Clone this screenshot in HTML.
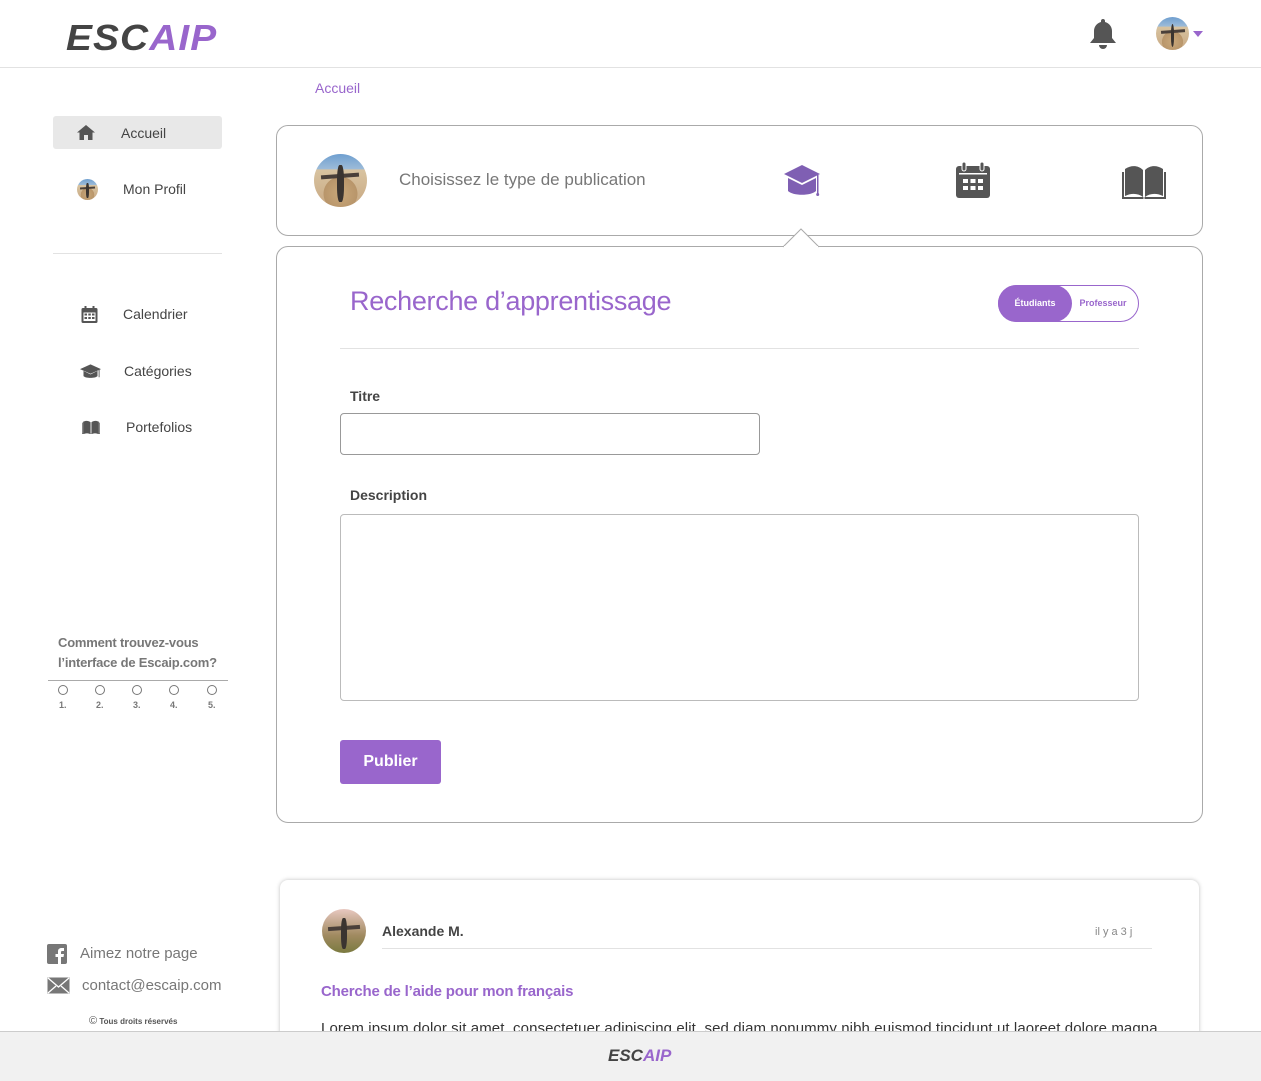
<!DOCTYPE html>
<html><head><meta charset="utf-8"><style>
*{margin:0;padding:0;box-sizing:border-box}
body{width:1261px;height:1081px;position:relative;overflow:hidden;background:#fff;font-family:"Liberation Sans",sans-serif;color:#444}
.a{position:absolute}
.av{border-radius:50%;background:radial-gradient(circle at 50% 75%,#c9a87a 0,#b8956a 35%,transparent 36%),linear-gradient(#6f9fd0 0,#9cbbd8 28%,#d8c3a0 30%,#c8a882 100%);overflow:hidden}
.av:after{content:"";position:absolute;left:44%;top:20%;width:12%;height:70%;background:#3a3430;border-radius:40%}
.av:before{content:"";position:absolute;left:14%;top:38%;width:72%;height:8%;background:#4a403a;transform:rotate(-4deg)}
.nav{font-size:14px;color:#444}
.purple{color:#9966cc}
.rc{position:absolute;width:10px;height:10px;border:1px solid #777;border-radius:50%}
.rn{position:absolute;font-size:9px;font-weight:bold;color:#777;top:15px}
</style></head><body>
<!-- header -->
<div class="a" style="left:0;top:0;width:1261px;height:68px;border-bottom:1px solid #e2e2e2"></div>
<div class="a" style="left:66px;top:18px;font-size:36px;font-weight:bold;font-style:italic;letter-spacing:1px;line-height:40px;transform:scaleX(1.08);transform-origin:left"><span style="color:#444">ESC</span><span style="color:#9966cc">AIP</span></div>
<svg class="a" style="left:1089px;top:18px" width="28" height="32" viewBox="0 0 28 32"><path d="M14 1c1.2 0 2 .8 2 2v1c4 1 7 4.5 7 9v7l4 5H1l4-5v-7c0-4.5 3-8 7-9V3c0-1.2.8-2 2-2z" fill="#555"/><path d="M10 27h8a4 4 0 0 1-8 0z" fill="#555"/></svg>
<div class="a av" style="left:1156px;top:17px;width:33px;height:33px"></div>
<svg class="a" style="left:1193px;top:31px" width="10" height="6"><path d="M0 0h10L5 6z" fill="#9966cc"/></svg>

<!-- sidebar -->
<div class="a" style="left:53px;top:116px;width:169px;height:33px;background:#e8e8e8;border-radius:3px"></div>
<svg class="a" style="left:77px;top:125px" width="18" height="15" viewBox="0 0 18 15"><path d="M9 0l9 7.5h-2.5V15h-4.5v-5H7v5H2.5V7.5H0z" fill="#555"/></svg>
<div class="a nav" style="left:121px;top:125px">Accueil</div>
<div class="a av" style="left:77px;top:179px;width:21px;height:21px"></div>
<div class="a nav" style="left:123px;top:181px">Mon Profil</div>
<div class="a" style="left:53px;top:253px;width:169px;height:1px;background:#e2e2e2"></div>
<svg class="a" style="left:81px;top:306px" width="17" height="17" viewBox="0 0 17 17"><rect x="0.5" y="2" width="16" height="15" rx="1.5" fill="#555"/><rect x="2.5" y="6.5" width="12" height="8.5" fill="#fff"/><g fill="#555"><rect x="3.5" y="7.5" width="2.5" height="2"/><rect x="7.3" y="7.5" width="2.5" height="2"/><rect x="11" y="7.5" width="2.5" height="2"/><rect x="3.5" y="11" width="2.5" height="2"/><rect x="7.3" y="11" width="2.5" height="2"/><rect x="11" y="11" width="2.5" height="2"/></g><rect x="3.5" y="0" width="2" height="4" fill="#555"/><rect x="11.5" y="0" width="2" height="4" fill="#555"/></svg>
<div class="a nav" style="left:123px;top:306px">Calendrier</div>
<svg class="a" style="left:80px;top:364px" width="21" height="16" viewBox="0 0 36 26"><path d="M18 0L36 8 18 16 0 8z" fill="#555"/><path d="M6 11v9c4 4 20 4 24 0v-9L18 17z" fill="#555"/><rect x="32" y="8" width="1.5" height="14" fill="#555"/></svg>
<div class="a nav" style="left:124px;top:363px">Catégories</div>
<svg class="a" style="left:82px;top:420px" width="18" height="14" viewBox="0 0 40 32"><path d="M2 4c6-3 12-3 17 1v27c-5-3-11-3-17 0z M21 5c5-4 11-4 17-1v28c-6-3-12-3-17 0z" fill="#555"/><path d="M0 6v26h40V6" fill="none" stroke="#555" stroke-width="2"/></svg>
<div class="a nav" style="left:126px;top:419px">Portefolios</div>

<div class="a" style="left:58px;top:633px;font-size:13px;font-weight:bold;color:#777;line-height:20px;letter-spacing:-0.2px">Comment trouvez-vous<br>l’interface de Escaip.com?</div>
<div class="a" style="left:48px;top:680px;width:180px;height:1px;background:#aaa"></div>
<div class="a" style="left:58px;top:685px;width:165px;height:30px">
<div class="rc" style="left:0"></div><div class="rn" style="left:1px">1.</div>
<div class="rc" style="left:37px"></div><div class="rn" style="left:38px">2.</div>
<div class="rc" style="left:74px"></div><div class="rn" style="left:75px">3.</div>
<div class="rc" style="left:111px"></div><div class="rn" style="left:112px">4.</div>
<div class="rc" style="left:149px"></div><div class="rn" style="left:150px">5.</div></div>

<svg class="a" style="left:47px;top:944px" width="20" height="20"><rect width="20" height="20" rx="2" fill="#777"/><path d="M11 20v-7h-2.5v-3H11V7.5c0-2.5 1.5-3.5 3.5-3.5H17v3h-1.8c-.8 0-1.2.4-1.2 1.2V10h3l-.5 3H14v7z" fill="#fff"/></svg>
<div class="a" style="left:80px;top:945px;font-size:15px;color:#777">Aimez notre page</div>
<svg class="a" style="left:47px;top:977px" width="23" height="17"><rect x="0.5" y="0.5" width="22" height="16" fill="#777"/><path d="M1 1l10.5 9L22 1M1 16l8-7M22 16l-8-7" stroke="#fff" fill="none" stroke-width="1.3"/></svg>
<div class="a" style="left:82px;top:977px;font-size:15px;color:#777">contact@escaip.com</div>
<div class="a" style="left:89px;top:1015px;font-size:8px;font-weight:bold;color:#555"><span style="font-size:11px;font-weight:normal">©</span> Tous droits réservés</div>

<!-- breadcrumb -->
<div class="a purple" style="left:315px;top:80px;font-size:14px">Accueil</div>

<!-- top card -->
<div class="a" style="left:276px;top:125px;width:927px;height:111px;border:1px solid #aaa;border-radius:12px"></div>
<div class="a av" style="left:314px;top:154px;width:53px;height:53px"></div>
<div class="a" style="left:399px;top:170px;font-size:17px;color:#777">Choisissez le type de publication</div>
<svg class="a" style="left:783px;top:165px" width="39" height="34" viewBox="0 0 39 34"><path d="M19 0L37 9 19 18 1 9z" fill="#7f5fb3"/><path d="M5 13v13c5 5 23 5 28 0V13L19 20z" fill="#7f5fb3"/><rect x="34" y="10" width="1.5" height="19" fill="#7f5fb3"/><circle cx="34.7" cy="29.5" r="1.5" fill="#7f5fb3"/></svg>
<svg class="a" style="left:955px;top:162px" width="36" height="36" viewBox="0 0 36 36"><rect x="1" y="4" width="34" height="32" rx="3" fill="#555"/><rect x="4" y="11" width="28" height="1.5" fill="#fff"/><g fill="#fff"><rect x="8" y="17" width="5" height="4"/><rect x="15.5" y="17" width="5" height="4"/><rect x="23" y="17" width="5" height="4"/><rect x="8" y="24" width="5" height="4"/><rect x="15.5" y="24" width="5" height="4"/><rect x="23" y="24" width="5" height="4"/></g><rect x="7" y="0" width="4" height="9" rx="2" fill="#555" stroke="#fff" stroke-width="1"/><rect x="25" y="0" width="4" height="9" rx="2" fill="#555" stroke="#fff" stroke-width="1"/></svg>
<svg class="a" style="left:1122px;top:165px" width="44" height="34" viewBox="0 0 44 34"><path d="M3 4c6-4 13-4 18 1v27c-5-4-12-4-18-1z M23 5c5-5 12-5 18-1v27c-6-3-13-3-18 1z" fill="#555"/><path d="M1 7v26h20.5M43 7v26H22.5" fill="none" stroke="#555" stroke-width="2"/></svg>

<!-- main card -->
<div class="a" style="left:276px;top:246px;width:927px;height:577px;border:1px solid #aaa;border-radius:12px"></div>
<svg class="a" style="left:783px;top:228px" width="40" height="20"><path d="M0 19L18 1l18 18" fill="#fff" stroke="#aaa" stroke-width="1"/></svg>
<div class="a" style="left:784px;top:246px;width:34px;height:2px;background:#fff"></div>
<div class="a purple" style="left:350px;top:286px;font-size:27px;letter-spacing:-0.3px">Recherche d’apprentissage</div>
<div class="a" style="left:998px;top:285px;width:141px;height:37px;border:1px solid #9966cc;border-radius:19px"></div>
<div class="a" style="left:998px;top:285px;width:74px;height:37px;background:#9966cc;border-radius:19px;color:#fff;font-size:9px;font-weight:bold;text-align:center;line-height:37px">Étudiants</div>
<div class="a purple" style="left:1072px;top:285px;width:62px;font-size:9px;font-weight:bold;text-align:center;line-height:37px">Professeur</div>
<div class="a" style="left:340px;top:348px;width:799px;height:1px;background:#e2e2e2"></div>
<div class="a" style="left:350px;top:388px;font-size:14px;font-weight:bold;color:#444">Titre</div>
<div class="a" style="left:340px;top:413px;width:420px;height:42px;border:1px solid #999;border-radius:4px"></div>
<div class="a" style="left:350px;top:487px;font-size:14px;font-weight:bold;color:#444">Description</div>
<div class="a" style="left:340px;top:514px;width:799px;height:187px;border:1px solid #bbb;border-radius:4px"></div>
<div class="a" style="left:340px;top:740px;width:101px;height:44px;background:#9966cc;border-radius:3px;color:#fff;font-size:16px;font-weight:bold;text-align:center;line-height:44px">Publier</div>

<!-- post -->
<div class="a" style="left:280px;top:880px;width:919px;height:200px;border-radius:8px;box-shadow:0 0 4px rgba(0,0,0,.25)"></div>
<div class="a av" style="left:322px;top:909px;width:44px;height:44px;background:linear-gradient(#e8c8c0,#a08a60 60%,#7a7a40)"></div>
<div class="a" style="left:382px;top:923px;font-size:14px;font-weight:bold;color:#444">Alexande M.</div>
<div class="a" style="left:1095px;top:926px;font-size:11px;color:#888">il y a 3 j</div>
<div class="a" style="left:382px;top:948px;width:770px;height:1px;background:#e2e2e2"></div>
<div class="a purple" style="left:321px;top:983px;font-size:15px;font-weight:bold;letter-spacing:-0.2px">Cherche de l’aide pour mon français</div>
<div class="a" style="left:321px;top:1020px;font-size:15px;color:#333;white-space:nowrap;letter-spacing:0.1px">Lorem ipsum dolor sit amet, consectetuer adipiscing elit, sed diam nonummy nibh euismod tincidunt ut laoreet dolore magna</div>

<!-- footer -->
<div class="a" style="left:0;top:1031px;width:1261px;height:50px;background:#f1f1f1;border-top:1px solid #ccc"></div>
<div class="a" style="left:608px;top:1046px;font-size:17px;font-weight:bold;font-style:italic;line-height:20px"><span style="color:#444">ESC</span><span style="color:#9966cc">AIP</span></div>
</body></html>
